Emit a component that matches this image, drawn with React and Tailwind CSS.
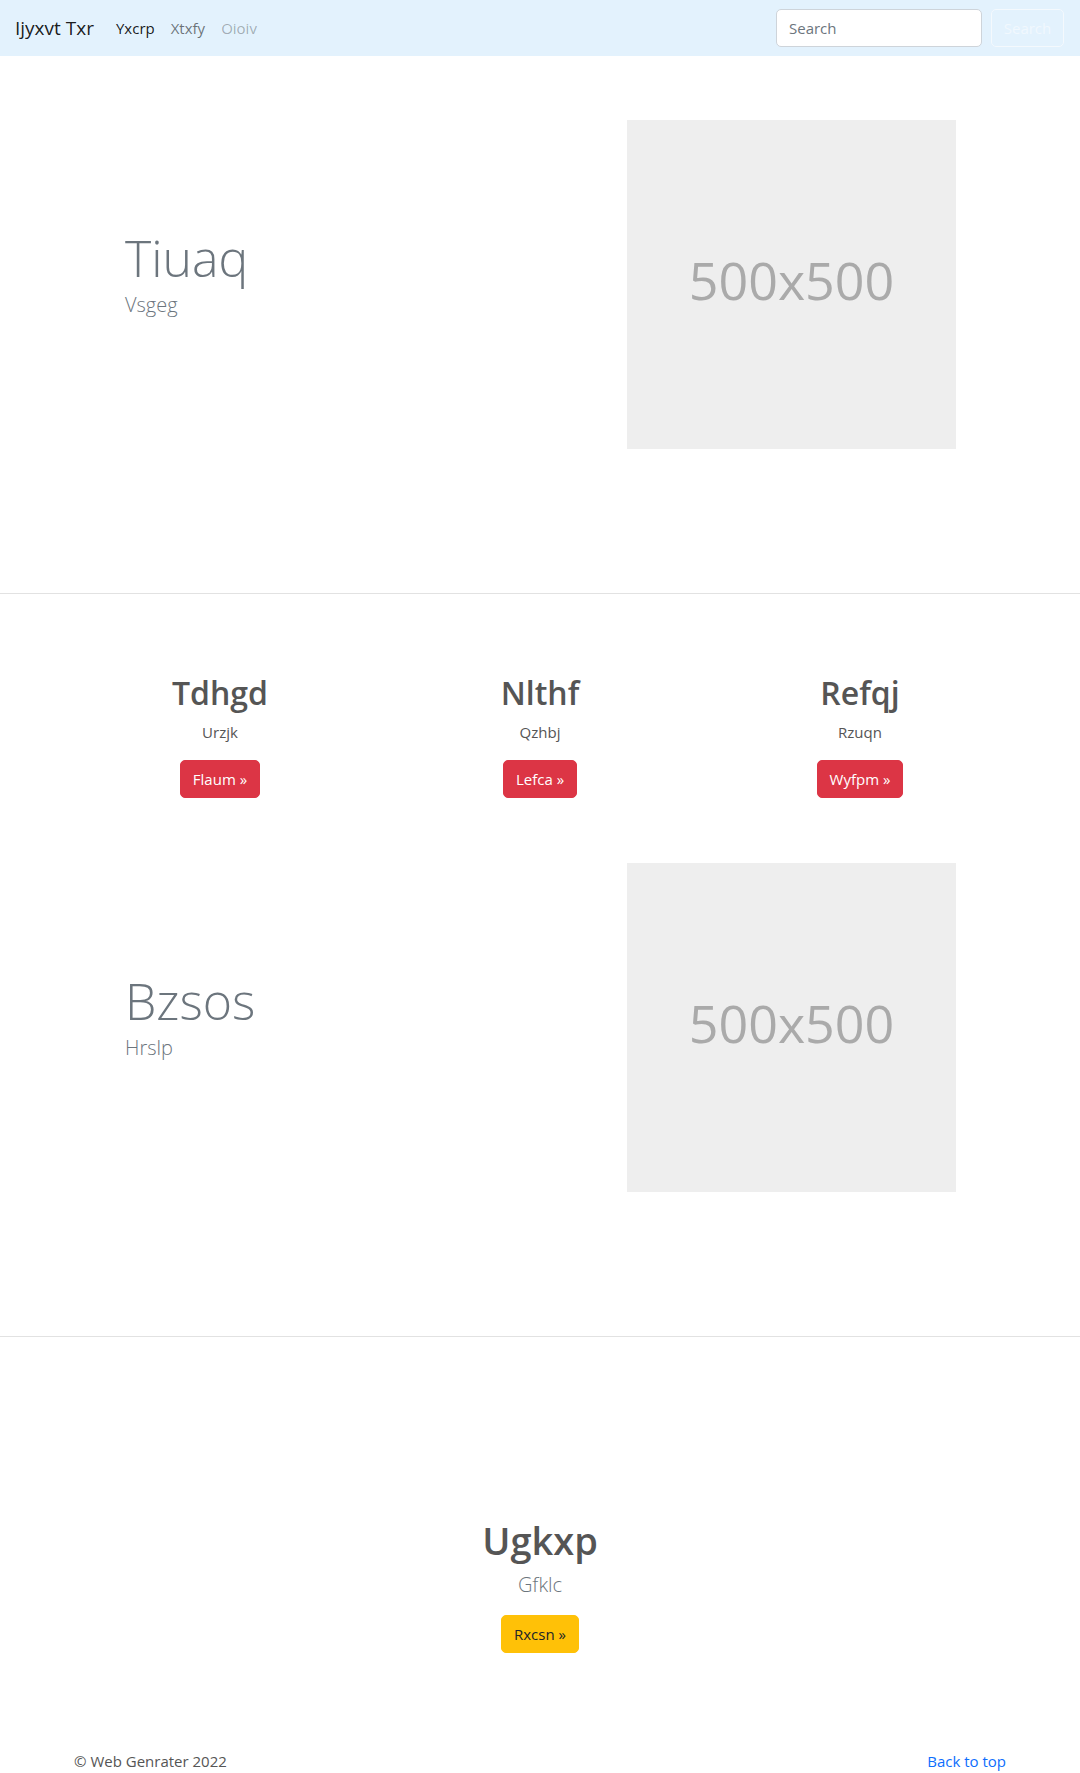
import React from "react";

const font = { fontFamily: '"Open Sans", "Noto Sans", "Liberation Sans", sans-serif' };

function Placeholder() {
  return (
    <div className="w-[329px] h-[329px] bg-[#eeeeee] flex items-center justify-center pb-[9px]">
      <span className="text-[52px] text-[#aaaaaa] leading-none">500x500</span>
    </div>
  );
}

function Hero({ title, sub }) {
  return (
    <section className="border-b border-[#e2e2e2] pb-[144px]">
      <div className="w-[960px] mx-auto flex items-center">
        <div className="w-[480px] pl-[65px]">
          <h1 className="text-[50px] font-light leading-[1.2] text-[#6c757d] mb-[2px]">{title}</h1>
          <p className="text-[20px] font-light leading-[1.5] text-[#6c757d] mb-[21px]">{sub}</p>
        </div>
        <div className="pl-[87px]">
          <Placeholder />
        </div>
      </div>
    </section>
  );
}

function Feature({ title, sub, btn }) {
  return (
    <div className="flex flex-col items-center text-center">
      <h2 className="text-[32px] font-semibold leading-[1.2] text-[#555555] mb-[8px]">{title}</h2>
      <p className="text-[15px] leading-[24px] text-[#555555] mb-[16px]">{sub}</p>
      <a className="inline-block h-[38px] px-[12px] leading-[36px] border border-[#dc3545] rounded-[5px] bg-[#dc3545] text-white text-[15px]">
        {btn} »
      </a>
    </div>
  );
}

export default function App() {
  return (
    <div className="bg-white min-h-[1773px]" style={font}>
      <nav className="h-[56px] bg-[#e3f2fd] flex items-center pl-[15px] pr-[16px]">
        <span className="text-[19px] text-black/90 mr-[14px]">Ijyxvt Txr</span>
        <div className="flex items-center text-[15px]">
          <a className="px-[8px] text-black/90">Yxcrp</a>
          <a className="px-[8px] text-black/55">Xtxfy</a>
          <a className="px-[8px] text-black/30">Oioiv</a>
        </div>
        <div className="ml-auto flex items-center">
          <div className="w-[206px] h-[38px] bg-white border border-[#ced4da] rounded-[5px] flex items-center pl-[12px] text-[15px] text-[#6c757d]">
            Search
          </div>
          <div className="ml-[9px] w-[73px] h-[38px] border border-[#f4f9fd] rounded-[5px] flex items-center justify-center text-[15px] text-[#f1f8fe]">
            Search
          </div>
        </div>
      </nav>

      <div className="pt-[64px]">
        <Hero title="Tiuaq" sub="Vsgeg" />
      </div>

      <section className="pt-[80px]">
        <div className="w-[960px] mx-auto grid grid-cols-3">
          <Feature title="Tdhgd" sub="Urzjk" btn="Flaum" />
          <Feature title="Nlthf" sub="Qzhbj" btn="Lefca" />
          <Feature title="Refqj" sub="Rzuqn" btn="Wyfpm" />
        </div>
      </section>

      <div className="pt-[65px]">
        <Hero title="Bzsos" sub="Hrslp" />
      </div>

      <section className="pt-[181px] pb-[48px] flex flex-col items-center text-center">
        <h1 className="text-[38px] font-semibold leading-[1.2] text-[#555555] mb-[6px]">Ugkxp</h1>
        <p className="text-[20px] font-light leading-[1.5] text-[#6c757d] mb-[15px]">Gfklc</p>
        <a className="inline-block h-[38px] px-[12px] leading-[36px] border border-[#ffc107] rounded-[5px] bg-[#ffc107] text-[#212529] text-[15px]">
          Rxcsn »
        </a>
      </section>

      <footer className="pt-[48px] pb-[48px]">
        <div className="w-[960px] mx-auto px-[14px] flex justify-between text-[15px] leading-[24px]">
          <span className="text-[#555555]">© Web Genrater 2022</span>
          <a className="text-[#0d6efd]">Back to top</a>
        </div>
      </footer>
    </div>
  );
}
